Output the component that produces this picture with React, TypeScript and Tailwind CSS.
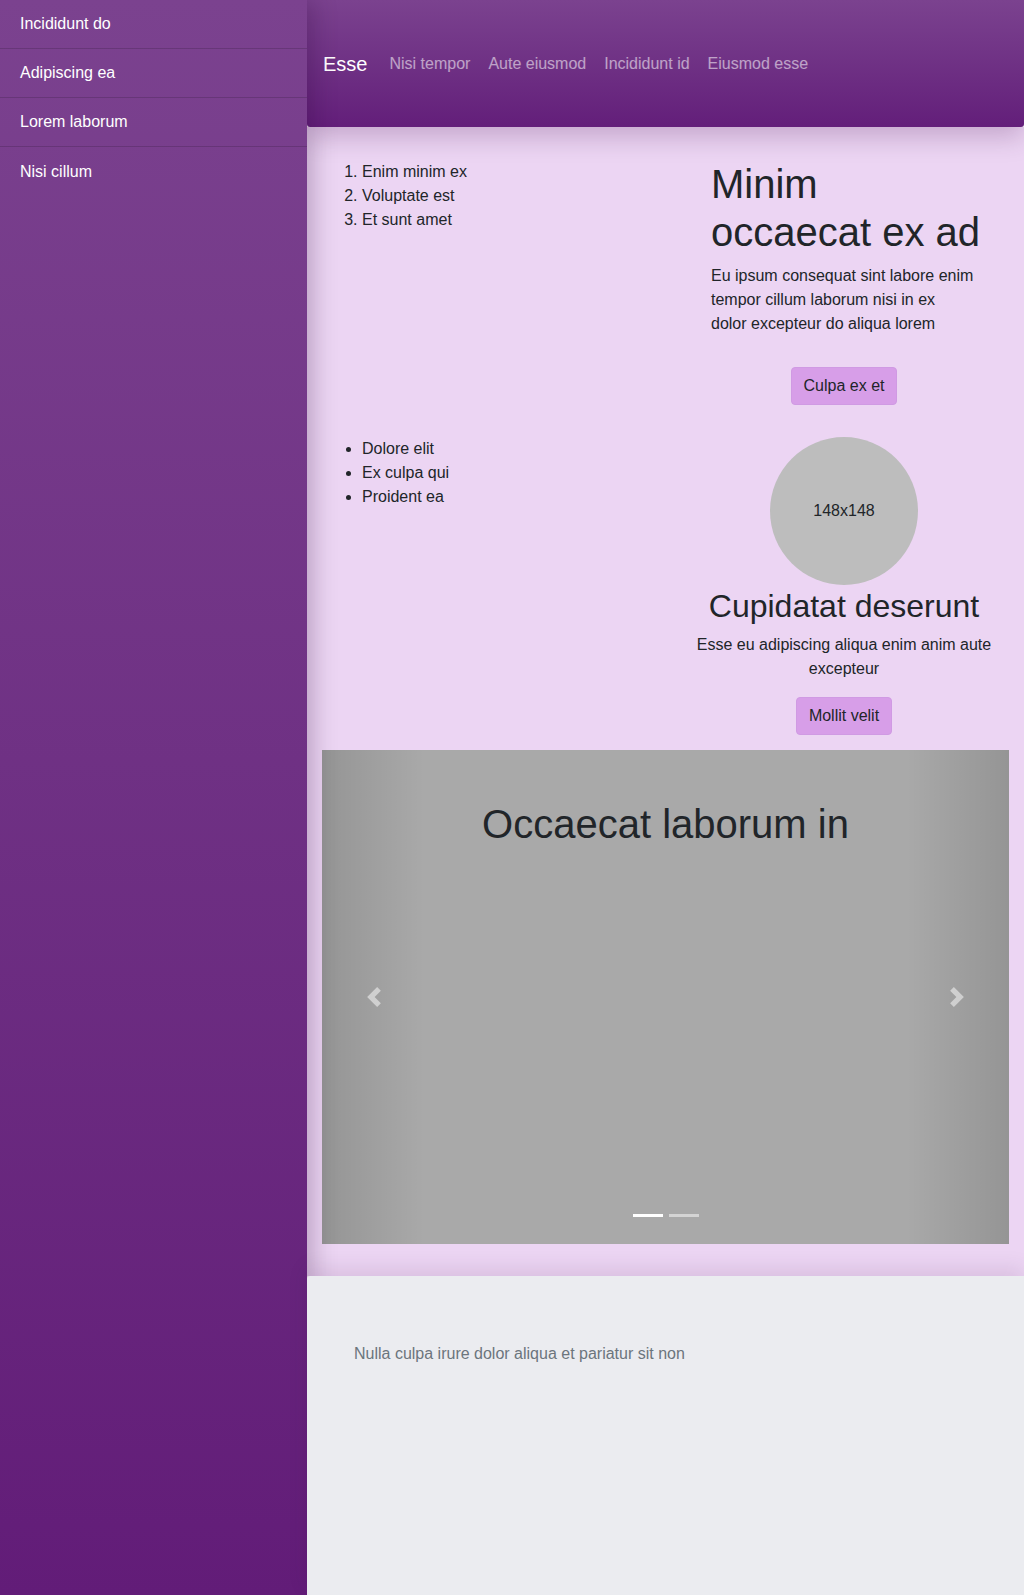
const font = { fontFamily: '"Liberation Sans", Arial, sans-serif' };

const sideItems = ["Incididunt do", "Adipiscing ea", "Lorem laborum", "Nisi cillum"];
const navLinks = ["Nisi tempor", "Aute eiusmod", "Incididunt id", "Eiusmod esse"];

function Chevron({ flip }: { flip?: boolean }) {
  return (
    <svg
      viewBox="0 0 8 8"
      className={flip ? "h-5 w-5 rotate-180" : "h-5 w-5"}
      fill="rgba(255,255,255,0.5)"
    >
      <path d="M5.25 0l-4 4 4 4 1.5-1.5L4.25 4l2.5-2.5L5.25 0z" />
    </svg>
  );
}

export default function App() {
  return (
    <div className="flex min-h-[1595px] w-full text-[#212529]" style={font}>
      {/* Sidebar */}
      <aside className="relative z-20 w-[307px] shrink-0 bg-gradient-to-b from-[#7b428f] to-[#621c78] shadow-[6px_0_22px_rgba(40,0,50,0.25)]">
        {sideItems.map((item, i) => (
          <div
            key={item}
            className={
              i < sideItems.length - 1
                ? "flex h-[49px] items-center border-b border-black/15 px-5 text-base text-white"
                : "flex h-[49px] items-center px-5 text-base text-white"
            }
          >
            {item}
          </div>
        ))}
      </aside>

      <div className="flex min-w-0 flex-1 flex-col">
        {/* Navbar */}
        <nav className="relative z-10 flex h-[127px] items-center gap-[18px] rounded-b-[3px] bg-gradient-to-b from-[#7b428f] to-[#631e7a] pl-4 shadow-[0_10px_26px_rgba(60,0,70,0.22)]">
          <span className="mr-1 text-xl text-white">Esse</span>
          {navLinks.map((l) => (
            <span key={l} className="text-base text-white/55">
              {l}
            </span>
          ))}
        </nav>

        {/* Main */}
        <main className="bg-[#ecd5f3] pb-8 pt-[33px]">
          <div className="grid grid-cols-[348px_300px] pl-[39px]">
            <ol className="list-decimal pl-4 leading-6">
              <li>Enim minim ex</li>
              <li>Voluptate est</li>
              <li>Et sunt amet</li>
            </ol>
            <div className="flex flex-col px-[17px]">
              <h1 className="mb-2 whitespace-nowrap text-[40px] font-medium leading-[48px]">
                Minim
                <br />
                occaecat ex ad
              </h1>
              <p className="whitespace-nowrap leading-6">
                Eu ipsum consequat sint labore enim
                <br />
                tempor cillum laborum nisi in ex
                <br />
                dolor excepteur do aliqua lorem
              </p>
              <button className="mx-auto mt-[31px] rounded border border-[#d09ae3] bg-[#d79ee8] px-3 py-1.5 leading-6">
                Culpa ex et
              </button>
            </div>
          </div>

          <div className="mt-8 grid grid-cols-[343px_310px] pl-[39px]">
            <ul className="list-disc pl-4 leading-6">
              <li>Dolore elit</li>
              <li>Ex culpa qui</li>
              <li>Proident ea</li>
            </ul>
            <div className="flex flex-col items-center text-center">
              <div className="flex h-[148px] w-[148px] items-center justify-center rounded-full bg-[#bdbdbd] text-base">
                148x148
              </div>
              <h2 className="mb-2 mt-0.5 text-[32px] font-medium leading-[38px]">
                Cupidatat deserunt
              </h2>
              <p className="whitespace-nowrap leading-6">
                Esse eu adipiscing aliqua enim anim aute
                <br />
                excepteur
              </p>
              <button className="mt-4 rounded border border-[#d09ae3] bg-[#d79ee8] px-3 py-1.5 leading-6">
                Mollit velit
              </button>
            </div>
          </div>

          {/* Carousel */}
          <div className="mx-[15px] mt-[15px]">
            <div className="relative h-[494px] bg-[#a9a9a9]">
              <h3 className="pt-[50px] text-center text-[40px] font-medium leading-[48px]">
                Occaecat laborum in
              </h3>
              <div className="absolute inset-y-0 left-0 flex w-[15%] items-center justify-center bg-gradient-to-r from-black/[0.12] to-transparent">
                <Chevron />
              </div>
              <div className="absolute inset-y-0 right-0 flex w-[15%] items-center justify-center bg-gradient-to-l from-black/[0.12] to-transparent">
                <Chevron flip />
              </div>
              <div className="absolute bottom-[27px] left-0 right-0 flex justify-center gap-1.5">
                <span className="h-[3px] w-[30px] bg-white" />
                <span className="h-[3px] w-[30px] bg-white/50" />
              </div>
            </div>
          </div>
        </main>

        {/* Footer */}
        <footer className="relative z-30 flex-1 rounded-tl-[3px] bg-[#ebecf0] pl-[47px] pt-[66px] shadow-[0_-8px_20px_rgba(60,0,70,0.1)]">
          <p className="leading-6 text-[#6c757d]">Nulla culpa irure dolor aliqua et pariatur sit non</p>
        </footer>
      </div>
    </div>
  );
}
